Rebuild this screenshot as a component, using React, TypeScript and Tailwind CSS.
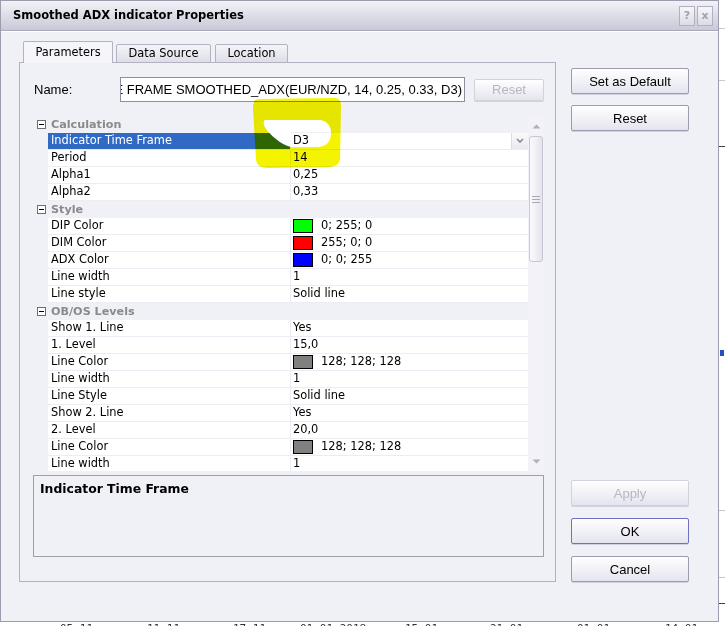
import React from 'react';
import clsx from 'clsx';

type Row =
  | { cat: string }
  | { name: string; value: string; swatch?: string; selected?: boolean };

const rows: Row[] = [
  { cat: 'Calculation' },
  { name: 'Indicator Time Frame', value: 'D3', selected: true },
  { name: 'Period', value: '14' },
  { name: 'Alpha1', value: '0,25' },
  { name: 'Alpha2', value: '0,33' },
  { cat: 'Style' },
  { name: 'DIP Color', value: '0; 255; 0', swatch: '#00ff00' },
  { name: 'DIM Color', value: '255; 0; 0', swatch: '#ff0000' },
  { name: 'ADX Color', value: '0; 0; 255', swatch: '#0000ff' },
  { name: 'Line width', value: '1' },
  { name: 'Line style', value: 'Solid line' },
  { cat: 'OB/OS Levels' },
  { name: 'Show 1. Line', value: 'Yes' },
  { name: '1. Level', value: '15,0' },
  { name: 'Line Color', value: '128; 128; 128', swatch: '#808080' },
  { name: 'Line width', value: '1' },
  { name: 'Line Style', value: 'Solid line' },
  { name: 'Show 2. Line', value: 'Yes' },
  { name: '2. Level', value: '20,0' },
  { name: 'Line Color', value: '128; 128; 128', swatch: '#808080' },
  { name: 'Line width', value: '1' },
];

// chart axis labels peeking out under the dialog
const axisLabels = [
  { x: 60, t: '05.11' },
  { x: 147, t: '11.11' },
  { x: 233, t: '17.11' },
  { x: 300, t: '01.01.2018' },
  { x: 405, t: '15.01' },
  { x: 490, t: '21.01' },
  { x: 577, t: '01.01' },
  { x: 665, t: '14.01' },
];

function Button({
  label,
  disabled,
  primary,
  small,
}: {
  label: string;
  disabled?: boolean;
  primary?: boolean;
  small?: boolean;
}) {
  return (
    <div
      className={clsx(
        'flex items-center justify-center rounded-[2px] border bg-linear-to-b from-white to-[#e4e4ee] font-["Liberation_Sans",sans-serif] text-[13px] shadow-[0_1px_0_rgba(150,150,180,0.35)]',
        small ? 'h-[22px] w-[70px]' : 'h-[26px] w-[118px]',
        disabled
          ? 'border-[#d2d2dc] text-[#b6b6c0]'
          : primary
            ? 'border-[#7070c8] text-black'
            : 'border-[#9c9cb0] text-black'
      )}
    >
      {label}
    </div>
  );
}

function MinusBox() {
  return (
    <div className="flex h-[9px] w-[9px] items-center justify-center border border-[#6e6e6e] bg-white">
      <div className="h-px w-[5px] bg-black" />
    </div>
  );
}

function GridRow({ row }: { row: Row }) {
  if ('cat' in row) {
    return (
      <div className="flex h-[17px] shrink-0 items-center bg-[#f0f0f7]">
        <div className="flex w-[15px] justify-center pl-[2px]">
          <MinusBox />
        </div>
        <span className="pl-[3px] text-[11.2px] font-bold text-[#8a8a8a]">{row.cat}</span>
      </div>
    );
  }
  return (
    <div className="flex h-[17px] shrink-0">
      <div className="w-[15px] bg-[#f0f0f7]" />
      <div
        className={clsx(
          'flex w-[243px] items-center border-r border-b border-[#ececf4] pl-[3px]',
          row.selected ? 'bg-[#316ac5] text-white' : 'bg-white text-black'
        )}
      >
        {row.name}
      </div>
      <div className="flex flex-1 items-center border-b border-[#ececf4] bg-white pl-[2px] text-black">
        {row.swatch && (
          <div className="mr-[8px] h-[14px] w-[20px] border border-black" style={{ background: row.swatch }} />
        )}
        <span className="flex-1">{row.value}</span>
        {row.selected && (
          <div className="flex h-[16px] w-[17px] items-center justify-center border-l border-[#dcdce6] bg-linear-to-b from-[#fafafc] to-[#e8e8f0]">
            <svg width="8" height="6" viewBox="0 0 8 6">
              <path d="M1 1 L4 4 L7 1" stroke="#8a8a9a" strokeWidth="1.6" fill="none" />
            </svg>
          </div>
        )}
      </div>
    </div>
  );
}

function ScrollBar() {
  return (
    <div className="flex w-[16px] flex-col items-center bg-[#f2f2f8]">
      <div className="flex h-[20px] items-center justify-center">
        <svg width="9" height="5" viewBox="0 0 9 5">
          <path d="M0.5 4.5 L4.5 0.5 L8.5 4.5 Z" fill="#b0b0bc" />
        </svg>
      </div>
      <div className="flex h-[126px] w-[14px] flex-col items-center justify-center gap-[2px] rounded-[3px] border border-[#c6c6d4] bg-linear-to-r from-[#fbfbfd] to-[#e4e4ee]">
        <div className="h-px w-[8px] bg-[#a8a8b8]" />
        <div className="h-px w-[8px] bg-[#a8a8b8]" />
        <div className="h-px w-[8px] bg-[#a8a8b8]" />
      </div>
      <div className="flex-1" />
      <div className="flex h-[20px] items-center justify-center">
        <svg width="9" height="5" viewBox="0 0 9 5">
          <path d="M0.5 0.5 L4.5 4.5 L8.5 0.5 Z" fill="#b0b0bc" />
        </svg>
      </div>
    </div>
  );
}

export default function App() {
  return (
    <div className="relative h-[626px] w-[725px] overflow-hidden bg-white font-['DejaVu_Sans',sans-serif] text-[11.4px] leading-none">
      <div className="flex">
        {/* dialog window */}
        <div className="flex h-[622px] w-[719px] flex-col border border-[#9c9cae] bg-[#f0f0f7]">
          <div className="flex h-[30px] shrink-0 items-center border-b border-[#a8a8bc] bg-linear-to-b from-[#f2f2f7] to-[#c9c9d9] pl-[12px] pr-[5px]">
            <span className="flex-1 text-[11.5px] font-bold text-black">Smoothed ADX indicator Properties</span>
            <div className="flex gap-[2px]">
              <div className="flex h-[20px] w-[16px] items-center justify-center border border-[#b0b0c0] bg-linear-to-b from-[#f6f6fa] to-[#dcdce6] text-[11px] font-bold text-[#a0a0b0]">?</div>
              <div className="flex h-[20px] w-[16px] items-center justify-center border border-[#b0b0c0] bg-linear-to-b from-[#f6f6fa] to-[#dcdce6] text-[11px] font-bold text-[#a0a0b0]">x</div>
            </div>
          </div>

          <div className="flex border-t border-white pl-[18px]">
            {/* tab control */}
            <div className="flex w-[537px] flex-col pt-[9px]">
              <div className="relative z-10 -mb-px flex items-end pl-[4px]">
                <div className="flex h-[22px] w-[90px] items-center justify-center rounded-t-[2px] border border-b-0 border-[#b2b2c2] bg-[#f6f6fa] text-black">
                  Parameters
                </div>
                <div className="ml-[3px] flex h-[19px] w-[95px] items-center justify-center rounded-t-[2px] border border-[#b2b2c2] bg-linear-to-b from-[#f4f4f8] to-[#dedee8] text-black">
                  Data Source
                </div>
                <div className="ml-[4px] flex h-[19px] w-[73px] items-center justify-center rounded-t-[2px] border border-[#b2b2c2] bg-linear-to-b from-[#f4f4f8] to-[#dedee8] text-black">
                  Location
                </div>
              </div>
              <div className="flex h-[520px] flex-col border border-[#b2b2c2] bg-[#f0f0f7] pl-[13px] pt-[14px]">
                <div className="flex h-[25px] items-center">
                  <span className="w-[87px] pl-[1px] font-['Liberation_Sans',sans-serif] text-[13px] text-black">Name:</span>
                  <div className="flex h-[25px] w-[345px] items-center justify-end overflow-hidden border border-[#8e8e9c] bg-white pr-[2px]">
                    <span className="whitespace-nowrap font-['Liberation_Sans',sans-serif] text-[13px] text-black">
                      INDICATOR TIME FRAME SMOOTHED_ADX(EUR/NZD, 14, 0.25, 0.33, D3)
                    </span>
                  </div>
                  <div className="ml-[9px]">
                    <Button label="Reset" disabled small />
                  </div>
                </div>

                <div className="mt-[14px] flex h-[355px] w-[511px] overflow-hidden bg-[#f0f0f7]">
                  <div className="flex flex-1 flex-col">
                    {rows.map((r, i) => (
                      <GridRow key={i} row={r} />
                    ))}
                  </div>
                  <ScrollBar />
                </div>

                <div className="mt-[4px] h-[82px] w-[511px] border border-[#9e9ea8] bg-[#f0f0f7] px-[6px] pt-[7px]">
                  <span className="text-[12.4px] font-bold text-black">Indicator Time Frame</span>
                </div>
              </div>
            </div>

            {/* dialog buttons */}
            <div className="ml-[15px] mt-[36px] flex h-[514px] flex-col justify-between">
              <div className="flex flex-col gap-[11px]">
                <Button label="Set as Default" />
                <Button label="Reset" />
              </div>
              <div className="flex flex-col gap-[12px]">
                <Button label="Apply" disabled />
                <Button label="OK" primary />
                <Button label="Cancel" />
              </div>
            </div>
          </div>
        </div>

        {/* chart behind the dialog, right edge */}
        <div className="relative h-[622px] flex-1 bg-white">
          <div className="absolute left-0 right-0 top-[28px] h-px bg-[#c8c8c8]" />
          <div className="absolute left-0 right-0 top-[80px] h-px bg-[#c8c8c8]" />
          <div className="absolute left-0 right-0 top-[146px] h-px bg-[#404040]" />
          <div className="absolute left-[1px] top-[350px] h-[6px] w-[4px] bg-[#2050c0]" />
          <div className="absolute left-0 right-0 top-[510px] h-px bg-[#c8c8c8]" />
          <div className="absolute left-0 right-0 top-[577px] h-px bg-[#c8c8c8]" />
          <div className="absolute left-0 right-0 top-[603px] h-px bg-[#404040]" />
        </div>
      </div>

      <div className="relative h-[4px] overflow-hidden bg-white">
        {axisLabels.map((l) => (
          <span
            key={l.x}
            className="absolute top-[1px] font-['DejaVu_Sans_Mono',monospace] text-[11px] text-[#303030]"
            style={{ left: l.x }}
          >
            {l.t}
          </span>
        ))}
      </div>

      {/* yellow marker scribble drawn over the screenshot */}
      <svg className="pointer-events-none absolute left-0 top-0" width="725" height="626" viewBox="0 0 725 626">
        <defs>
          <mask id="holeMask">
            <rect x="0" y="0" width="725" height="626" fill="white" />
            <rect x="291" y="132" width="219" height="17" fill="black" />
          </mask>
        </defs>
        <path
          className="mix-blend-multiply"
          fillRule="evenodd"
          fill="#f4f400"
          d="M258 99 L336 98 Q341 99 341 106 L340 160 Q338 167 330 167 L268 168 Q257 168 256 160 L253 108 Q253 99 258 99 Z M266 120 L320 120 Q331 122 331 133 Q331 146 318 147 L291 147 Q283 145 276 139 Q267 132 264 125 Q263 120 266 120 Z"
        />
        <path
          mask="url(#holeMask)"
          fill="#ffffff"
          d="M266 120 L320 120 Q331 122 331 133 Q331 146 318 147 L291 147 Q283 145 276 139 Q267 132 264 125 Q263 120 266 120 Z"
        />
      </svg>
    </div>
  );
}
